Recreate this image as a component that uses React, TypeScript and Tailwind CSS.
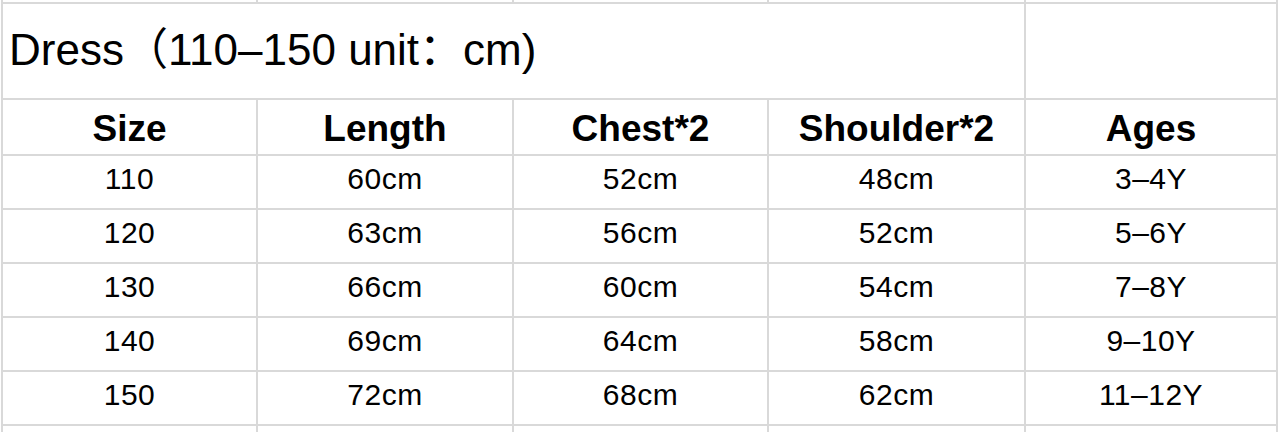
const COLUMNS = ['Size', 'Length', 'Chest*2', 'Shoulder*2', 'Ages'];

const ROWS = [
  ['110', '60cm', '52cm', '48cm', '3–4Y'],
  ['120', '63cm', '56cm', '52cm', '5–6Y'],
  ['130', '66cm', '60cm', '54cm', '7–8Y'],
  ['140', '69cm', '64cm', '58cm', '9–10Y'],
  ['150', '72cm', '68cm', '62cm', '11–12Y'],
];

const FONT = "font-['Liberation_Sans','Noto_Sans_CJK_SC',sans-serif]";

export default function App() {
  return (
    <div className={`w-[1278px] h-[432px] bg-white overflow-hidden text-black ${FONT}`}>
      <div className="ml-[1px] w-[1277px] h-[432px] bg-[#d9d9d9] px-[2px] grid gap-[2px] grid-cols-[253px_254px_253px_255px_250px] grid-rows-[2px_94px_54px_52px_52px_52px_52px_52px_6px]">
        {/* row cut off above */}
        {COLUMNS.map(c => (
          <div key={`top-${c}`} className="bg-white" />
        ))}

        <div className="col-span-4 bg-white flex items-center pl-[6px] pb-[2px] text-[44px] leading-none whitespace-pre">
          Dress（110–150 unit：cm)
        </div>
        <div className="bg-white" />

        {COLUMNS.map(c => (
          <div key={c} className="bg-white flex items-center justify-center pt-[2px] text-[37px] font-bold leading-none">
            {c}
          </div>
        ))}

        {ROWS.map(row =>
          row.map((cell, i) => (
            <div key={`${row[0]}-${i}`} className="bg-white flex items-center justify-center pb-[6px] text-[30px] tracking-[0.5px] leading-none">
              {cell}
            </div>
          ))
        )}

        {/* row cut off below */}
        {COLUMNS.map(c => (
          <div key={`bottom-${c}`} className="bg-white" />
        ))}
      </div>
    </div>
  );
}
